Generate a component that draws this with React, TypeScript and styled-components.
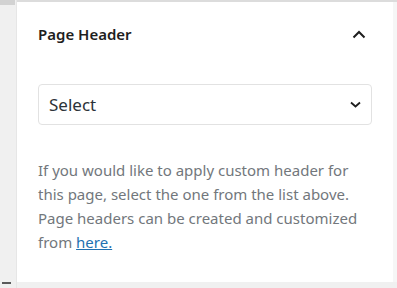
import React from "react";
import styled, { createGlobalStyle } from "styled-components";

const Global = createGlobalStyle`
  html, body { margin: 0; padding: 0; background: #f0f0f0; }
  body { width: 397px; height: 288px; overflow: hidden; font-family: "Noto Sans", "Open Sans", sans-serif; }
`;

const Frame = styled.div`
  display: flex;
  width: 397px;
  height: 288px;
  background: #f0f0f0;
`;

const Gutter = styled.div`
  position: relative;
  width: 17px;
  flex: 0 0 17px;
  background: #f0f0f0;
  border-right: 1px solid #e6e6e6;
  box-sizing: border-box;
`;

const GutterTop = styled.div`
  width: 15px;
  height: 5px;
  background: #d2d2d2;
`;

const GutterMark = styled.div`
  position: absolute;
  left: 2px;
  top: 282px;
  width: 9px;
  height: 2px;
  background: #5a5a5a;
`;

const Column = styled.div`
  flex: 1;
  display: flex;
  flex-direction: column;
`;

const TopRule = styled.div`
  height: 2px;
  background: #dcdcdc;
`;

const Panel = styled.section`
  height: 280px;
  box-sizing: border-box;
  background: #fff;
  border-right: 4px solid #f6f6f6;
  padding: 20px 25px 0 21px;
  display: flex;
  flex-direction: column;
`;

const Header = styled.div`
  display: flex;
  align-items: center;
  justify-content: space-between;
  height: 24px;
`;

const Title = styled.h2`
  margin: 0;
  font-size: 15px;
  font-weight: 600;
  color: #1e1e1e;
  letter-spacing: 0;
`;

const IconButton = styled.button`
  border: 0;
  background: none;
  padding: 0;
  width: 16px;
  height: 16px;
  display: flex;
  align-items: center;
  justify-content: center;
  color: #1e1e1e;
  margin-right: 1px;
`;

const SelectBox = styled.div`
  margin-top: 38px;
  height: 41px;
  box-sizing: border-box;
  border: 1px solid #e2e2e2;
  border-radius: 4px;
  display: flex;
  align-items: center;
  justify-content: space-between;
  padding: 0 10px 0 10px;
  margin-right: -4px;
`;

const SelectText = styled.span`
  font-size: 17px;
  color: #2c3338;
`;

const Help = styled.p`
  margin: 33px 0 0;
  font-size: 15px;
  line-height: 24px;
  color: #72777c;
`;

const Link = styled.a`
  color: #2271b1;
  text-decoration: underline;
`;

export default function App() {
  return (
    <>
      <Global />
      <Frame>
        <Gutter>
          <GutterTop />
          <GutterMark />
        </Gutter>
        <Column>
          <TopRule />
          <Panel>
            <Header>
              <Title>Page Header</Title>
              <IconButton aria-label="Collapse">
                <svg width="14" height="9" viewBox="0 0 14 9" fill="none">
                  <path d="M1.5 7.5 L7 2 L12.5 7.5" stroke="#1e1e1e" strokeWidth="2" />
                </svg>
              </IconButton>
            </Header>
            <SelectBox>
              <SelectText>Select</SelectText>
              <svg width="11" height="7" viewBox="0 0 11 7" fill="none">
                <path d="M1 1.5 L5.5 5.5 L10 1.5" stroke="#1e1e1e" strokeWidth="1.8" />
              </svg>
            </SelectBox>
            <Help>
              If you would like to apply custom header for this page, select the one from the list above. Page headers can be created and customized from <Link href="#">here.</Link>
            </Help>
          </Panel>
        </Column>
      </Frame>
    </>
  );
}
